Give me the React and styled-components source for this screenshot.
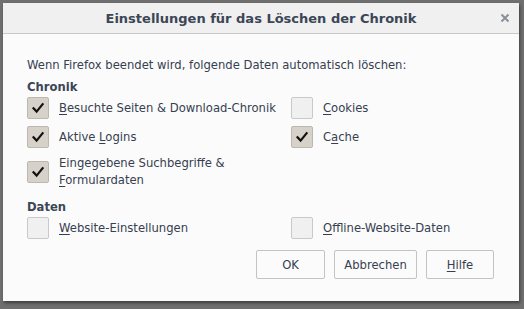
import React from "react";
import styled, { createGlobalStyle } from "styled-components";

const Global = createGlobalStyle`
  html, body { margin: 0; padding: 0; background: #6f6f6f; }
  body { width: 524px; height: 309px; overflow: hidden; font-family: "DejaVu Sans", Verdana, sans-serif; }
`;

const Page = styled.div`
  width: 524px;
  height: 309px;
  box-sizing: border-box;
  padding: 3px 0 0 3px;
  background: #6f6f6f;
`;

const Dialog = styled.div`
  width: 516px;
  height: 298px;
  background: #fbfbfb;
  box-shadow: 1px 2px 3px rgba(0, 0, 0, 0.45);
  display: flex;
  flex-direction: column;
`;

const TitleBar = styled.div`
  position: relative;
  height: 30px;
  flex: none;
  background: #f0f0f0;
  border-bottom: 1px solid #c9c9c9;
  display: flex;
  align-items: center;
  justify-content: center;
`;

const Title = styled.div`
  font-family: "DejaVu Sans", Verdana, sans-serif;
  font-weight: bold;
  font-size: 13px;
  color: #3b4656;
`;

const Close = styled.div`
  position: absolute;
  right: 8px;
  top: 9px;
  width: 12px;
  height: 12px;
  display: flex;
`;

const Content = styled.div`
  padding: 23px 25px 0 24px;
  display: flex;
  flex-direction: column;
  color: #364051;
  font-size: 11.6px;
`;

const Intro = styled.div`
  line-height: 16px;
  margin-bottom: 6px;
`;

const Heading = styled.div`
  font-weight: bold;
  line-height: 16px;
  color: #3b4656;
  margin-bottom: ${(p) => p.$mb || 2}px;
  margin-top: ${(p) => p.$mt || 0}px;
`;

const Grid = styled.div`
  display: grid;
  grid-template-columns: 264px 1fr;
  row-gap: 7px;
  align-items: center;
`;

const Item = styled.label`
  display: flex;
  align-items: center;
  gap: 10px;
`;

const Box = styled.span`
  width: 20px;
  height: 20px;
  flex: none;
  border: 1px solid ${(p) => (p.$checked ? "#bcb8b0" : "#c9c9c9")};
  border-radius: 2px;
  background: ${(p) => (p.$checked ? "#d6d2ca" : "#f0f0f0")};
  display: flex;
  align-items: center;
  justify-content: center;
`;

const Label = styled.span`
  line-height: 17px;
`;

const Key = styled.span`
  text-decoration: underline;
  text-underline-offset: 2px;
`;

const Buttons = styled.div`
  display: flex;
  justify-content: flex-end;
  gap: 9px;
  margin-top: 11px;
`;

const Button = styled.div`
  box-sizing: border-box;
  width: ${(p) => p.$w}px;
  height: 29px;
  border: 1px solid #c3c3c3;
  border-radius: 2px;
  background: #fbfbfb;
  display: flex;
  align-items: center;
  justify-content: center;
  color: #364051;
`;

const Check = () => (
  <svg width="14" height="14" viewBox="0 0 14 14">
    <path d="M2.5 7.2 L5.6 10.6 L11.6 3.2" fill="none" stroke="#111" strokeWidth="2.2" strokeLinecap="square" strokeLinejoin="miter" />
  </svg>
);

const CB = ({ checked, children }) => (
  <Item>
    <Box $checked={checked}>{checked && <Check />}</Box>
    <Label>{children}</Label>
  </Item>
);

export default function App() {
  return (
    <>
      <Global />
      <Page>
        <Dialog>
          <TitleBar>
            <Title>Einstellungen für das Löschen der Chronik</Title>
            <Close>
              <svg width="12" height="12" viewBox="0 0 12 12">
                <path d="M2.5 2.5 L9.5 9.5 M9.5 2.5 L2.5 9.5" stroke="#8a9098" strokeWidth="2" />
              </svg>
            </Close>
          </TitleBar>
          <Content>
            <Intro>Wenn Firefox beendet wird, folgende Daten automatisch löschen:</Intro>
            <Heading>Chronik</Heading>
            <Grid>
              <CB checked>
                <Key>B</Key>esuchte Seiten &amp; Download-Chronik
              </CB>
              <CB>
                <Key>C</Key>ookies
              </CB>
              <CB checked>
                Aktive <Key>L</Key>ogins
              </CB>
              <CB checked>
                C<Key>a</Key>che
              </CB>
              <CB checked>
                Eingegebene Suchbegriffe &amp;
                <br />
                <Key>F</Key>ormulardaten
              </CB>
              <span />
            </Grid>
            <Heading $mt={10}>Daten</Heading>
            <Grid>
              <CB>
                <Key>W</Key>ebsite-Einstellungen
              </CB>
              <CB>
                <Key>O</Key>ffline-Website-Daten
              </CB>
            </Grid>
            <Buttons>
              <Button $w={69}>OK</Button>
              <Button $w={83}>Abbrechen</Button>
              <Button $w={68}>
                <Key>H</Key>ilfe
              </Button>
            </Buttons>
          </Content>
        </Dialog>
      </Page>
    </>
  );
}
